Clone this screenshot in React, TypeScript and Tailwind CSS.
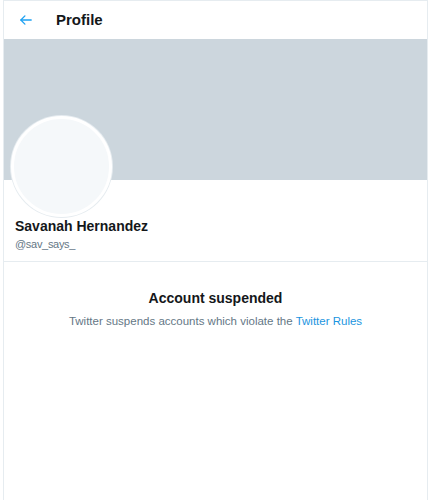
export default function App() {
  return (
    <div
      className="h-[500px] w-[432px] overflow-hidden bg-white"
      style={{ fontFamily: '"Liberation Sans", Arial, sans-serif' }}
    >
      <div className="ml-[3px] flex h-full w-[425px] flex-col border-x border-t border-[#e6ecf0]">
        {/* header */}
        <div className="flex h-[38px] items-center pl-[16px]">
          <svg width="12" height="10" viewBox="0 0 12 10" fill="none" stroke="#1da1f2" strokeWidth="1.3" strokeLinecap="round" strokeLinejoin="round">
            <path d="M11.2 5H0.9" />
            <path d="M4.9 0.9 0.9 5l4 4.1" />
          </svg>
          <span className="ml-[24px] text-[15px] font-bold text-[#14171a]">Profile</span>
        </div>

        {/* banner */}
        <div className="h-[141px] bg-[#ccd6dd]" />

        {/* avatar + names */}
        <div className="px-[7px] pb-[8px]">
          <div className="-mt-[64px] h-[101px] w-[101px] rounded-full border-[3px] border-white bg-[#f5f8fa] shadow-[0_0_0_1px_#e6ecf0]" />
          <div className="px-[4px]">
            <div className="text-[14px] font-bold leading-[18px] text-[#14171a]">Savanah Hernandez</div>
            <div className="text-[11px] leading-[18px] tracking-[-0.3px] text-[#657786]">@sav_says_</div>
          </div>
        </div>

        <div className="border-t border-[#e6ecf0]" />

        {/* suspended notice */}
        <div className="flex flex-col items-center pt-[27px]">
          <div className="text-[14px] font-bold leading-[18px] text-[#14171a]">Account suspended</div>
          <div className="mt-[6px] text-[11.5px] leading-[16px] text-[#657786]">
            Twitter suspends accounts which violate the{' '}
            <span className="text-[#1b95e0]">Twitter Rules</span>
          </div>
        </div>
      </div>
    </div>
  )
}
